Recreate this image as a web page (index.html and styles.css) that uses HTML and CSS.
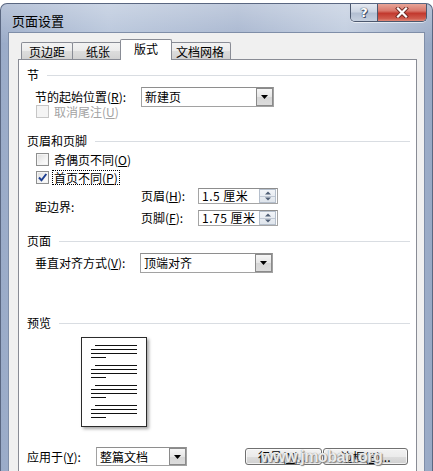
FILE: index.html
```html
<!DOCTYPE html>
<html lang="zh-CN">
<head>
<meta charset="utf-8">
<title>页面设置</title>
<link rel="stylesheet" href="styles.css">
</head>
<body>
<div class="window">
  <div class="titlebar">
    <span class="title">页面设置</span>
    <div class="caption">
      <div class="cbtn help">?</div>
      <div class="cbtn close">
        <svg width="14" height="11" viewBox="0 0 14 11"><path d="M3 1.5 L11 9.5 M11 1.5 L3 9.5" stroke="#6e2a24" stroke-width="4" stroke-linecap="square"/><path d="M3 1.5 L11 9.5 M11 1.5 L3 9.5" stroke="#fff" stroke-width="2.2" stroke-linecap="square"/></svg>
      </div>
    </div>
  </div>
  <div class="client">
    <div class="tabs">
      <div class="tab">页边距</div>
      <div class="tab">纸张</div>
      <div class="tab active">版式</div>
      <div class="tab">文档网格</div>
    </div>
    <div class="panel">
      <div class="head"><span>节</span><i class="rule"></i></div>
      <div class="row start-row">
        <span class="lbl lbl-wide">节的起始位置(<u>R</u>):</span>
        <div class="combo combo-wide"><span>新建页</span><b class="drop"><svg width="7" height="4" viewBox="0 0 7 4"><path d="M0 0H7L3.5 4Z" fill="#000"/></svg></b></div>
      </div>
      <div class="row check-row endnote-row disabled">
        <i class="box"></i><span class="ctext">取消尾注(<u>U</u>)</span>
      </div>

      <div class="head head-hf"><span>页眉和页脚</span><i class="rule"></i></div>
      <div class="row check-row cb-first">
        <i class="box"></i><span class="ctext">奇偶页不同(<u>O</u>)</span>
      </div>
      <div class="row check-row cb-next">
        <i class="box"><svg width="11" height="11" viewBox="0 0 11 11"><path d="M2 5.5 L4.5 8.3 L9.3 2" fill="none" stroke="#1d3f91" stroke-width="2"/></svg></i><span class="ctext focus">首页不同(<u>P</u>)</span>
      </div>
      <div class="row margin-block">
        <span class="lbl lbl-wide">距边界:</span>
        <div class="spins">
          <div class="spin-row">
            <span class="lbl lbl-spin">页眉(<u>H</u>):</span>
            <div class="spinbox"><span>1.5 厘米</span><b class="spinner"><i class="up"></i><i class="down"></i></b></div>
          </div>
          <div class="spin-row">
            <span class="lbl lbl-spin">页脚(<u>F</u>):</span>
            <div class="spinbox"><span>1.75 厘米</span><b class="spinner"><i class="up"></i><i class="down"></i></b></div>
          </div>
        </div>
      </div>

      <div class="head head-page"><span>页面</span><i class="rule"></i></div>
      <div class="row valign-row">
        <span class="lbl lbl-valign">垂直对齐方式(<u>V</u>):</span>
        <div class="combo combo-wide"><span>顶端对齐</span><b class="drop"><svg width="7" height="4" viewBox="0 0 7 4"><path d="M0 0H7L3.5 4Z" fill="#000"/></svg></b></div>
      </div>

      <div class="head head-preview"><span>预览</span><i class="rule"></i></div>
      <div class="preview">
        <div class="para"><i class="ln first"></i><i class="ln"></i><i class="ln"></i><i class="ln last"></i></div>
        <div class="para"><i class="ln first"></i><i class="ln"></i><i class="ln"></i><i class="ln last"></i></div>
        <div class="para"><i class="ln first"></i><i class="ln"></i><i class="ln"></i><i class="ln last"></i></div>
        <div class="para"><i class="ln first"></i><i class="ln"></i><i class="ln"></i><i class="ln last"></i></div>
      </div>

      <div class="apply-row">
        <span class="lbl lbl-apply">应用于(<u>Y</u>):</span>
        <div class="combo combo-apply"><span>整篇文档</span><b class="drop"><svg width="7" height="4" viewBox="0 0 7 4"><path d="M0 0H7L3.5 4Z" fill="#000"/></svg></b></div>
        <div class="buttons">
          <div class="btn btn-line">行号(<u>N</u>)...</div>
          <div class="btn btn-border">边框(<u>B</u>)...</div>
        </div>
      </div>
    </div>
  </div>
  <div class="watermark">www.jmoban.org</div>
</div>
</body>
</html>
```

FILE: styles.css
```css
* { box-sizing: border-box; }

html, body {
  margin: 0;
  padding: 0;
}

body {
  width: 433px;
  height: 471px;
  overflow: hidden;
  background: #ffffff;
  font-family: "Noto Sans CJK SC", "Noto Sans", sans-serif;
  font-size: 12px;
  color: #000;
}

u { text-decoration: underline; text-underline-offset: 1px; }

.window {
  position: relative;
  height: 468px;
  margin-top: 3px;
  border: 1px solid #5a6781;
  border-bottom: none;
  border-radius: 7px 7px 0 0;
  background:
    linear-gradient(to bottom, rgba(255,255,255,0.3), rgba(255,255,255,0) 40px),
    linear-gradient(to right, #9aabc8 0%, #b6c4da 25%, #a5b4ce 55%, #bfcbde 80%, #98a9c5 100%);
  padding: 0 7px;
  display: flex;
  flex-direction: column;
}

/* title bar */
.titlebar {
  height: 28px;
  display: flex;
  align-items: flex-start;
  flex: none;
}

.title {
  margin-top: 10px;
  margin-left: 4px;
  line-height: 14px;
  font-size: 13px;
  color: #000;
}

.caption {
  margin-left: auto;
  margin-right: -2px;
  display: flex;
  height: 18px;
  border: 1px solid #4c586e;
  border-top: none;
  border-radius: 0 0 5px 5px;
  overflow: hidden;
  box-shadow: 0 1px 0 rgba(255,255,255,0.6);
}

.cbtn {
  height: 17px;
  display: flex;
  align-items: center;
  justify-content: center;
}

.help {
  width: 27px;
  border-right: 1px solid #4c586e;
  background: linear-gradient(to bottom, #e4e9f1 0%, #ccd5e3 45%, #b3bfd2 55%, #c6d0df 100%);
  color: #fff;
  font-family: "DejaVu Sans", sans-serif;
  font-weight: bold;
  font-size: 13px;
  line-height: 17px;
  text-shadow: 0 0 1px #36435c, 0 0 1px #36435c, 1px 1px 0 #4a566e;
}

.close {
  width: 48px;
  background: linear-gradient(to bottom, #e8a598 0%, #d9786c 40%, #c2392e 55%, #cf5a4c 85%, #e08a7a 100%);
}

/* client */
.client {
  flex: 1;
  background: #f0f0f0;
  border: 1px solid #7f8ea8;
  border-bottom: none;
  display: flex;
  flex-direction: column;
  min-height: 0;
}

.tabs {
  display: flex;
  align-items: flex-end;
  height: 20px;
  margin-top: 6px;
  padding-left: 12px;
  flex: none;
  position: relative;
  z-index: 2;
}

.tab {
  height: 17px;
  min-width: 52px;
  padding: 0 6px;
  margin-right: -1px;
  border: 1px solid #898c95;
  border-bottom: none;
  border-radius: 2px 2px 0 0;
  background: linear-gradient(to bottom, #f3f3f3 0%, #ebebeb 50%, #dddddd 50%, #d2d2d2 100%);
  line-height: 17px;
  text-align: center;
  color: #000;
}

.tab.active {
  height: 21px;
  margin: 0 -1px -1px -3px;
  padding: 0 8px;
  background: #ffffff;
  position: relative;
  z-index: 3;
  line-height: 18px;
}

.tab.active + .tab { margin-left: -2px; }

.panel {
  flex: 1;
  margin: 0 7px 0 9px;
  background: #fff;
  border: 1px solid #898c95;
  border-bottom: none;
  padding: 8px 6px 0 8px;
  display: flex;
  flex-direction: column;
  position: relative;
  z-index: 1;
}

.head {
  display: flex;
  align-items: center;
  gap: 8px;
  height: 14px;
  line-height: 14px;
  flex: none;
}

.head .rule {
  flex: 1;
  height: 1px;
  background: #d9dde2;
}

.head-hf { margin-top: 16px; }
.head-page { margin-top: 8px; }
.head-preview { margin-top: 43px; }

.row {
  display: flex;
  align-items: center;
  padding-left: 8px;
  flex: none;
}

.lbl { white-space: nowrap; line-height: 14px; }
.lbl-wide { width: 106px; }
.lbl-valign { width: 105px; }
.lbl-spin { width: 57px; }
.lbl-apply { width: 69px; }

.start-row { margin-top: 5px; height: 20px; }

.combo {
  height: 20px;
  border: 1px solid #a2a2a2;
  border-top-color: #8e8e8e;
  background: #fff;
  display: flex;
  align-items: center;
  padding-left: 3px;
  position: relative;
}

.combo span { line-height: 14px; }

.combo-wide { width: 133px; }

.combo .drop {
  position: absolute;
  right: 0;
  top: 0;
  bottom: 0;
  width: 17px;
  border: 1px solid #8a8a8a;
  background: linear-gradient(to bottom, #f6f6f6 0%, #e6e6e6 50%, #d6d6d6 51%, #dcdcdc 100%);
  display: flex;
  align-items: center;
  justify-content: center;
}

.check-row {
  height: 13px;
  padding-left: 9px;
  gap: 3px;
}

.endnote-row { margin-top: -2px; }
.cb-first { margin-top: 5px; }
.cb-next { margin-top: 5px; }

.box {
  width: 13px;
  height: 13px;
  border: 1px solid #8e8f8f;
  background: linear-gradient(135deg, #dcdcdc 0%, #f4f4f4 60%, #ffffff 100%);
  box-shadow: inset 0 0 0 1px #f4f4f4;
  display: flex;
  align-items: center;
  justify-content: center;
  flex: none;
}

.disabled .box {
  border-color: #c6c6c6;
  background: #f4f4f4;
}

.disabled .ctext { color: #a3a3a3; }

.ctext { line-height: 13px; padding: 0 1px; border: 1px solid transparent; }
.ctext.focus { border: 1px dotted #000; }

.margin-block {
  margin-top: 4px;
  height: 38px;
}

.spins {
  display: flex;
  flex-direction: column;
  gap: 6px;
}

.spin-row {
  display: flex;
  align-items: center;
  height: 16px;
}

.spinbox {
  width: 80px;
  height: 16px;
  border: 1px solid #a5a5a5;
  border-top-color: #8d8d8d;
  background: #fff;
  display: flex;
  align-items: center;
  padding-left: 3px;
  position: relative;
}

.spinbox span { line-height: 14px; letter-spacing: 0.5px; }

.spinner {
  position: absolute;
  right: 1px;
  top: 0;
  bottom: 0;
  width: 17px;
  display: flex;
  flex-direction: column;
  border: 1px solid #b5bfcc;
  background: linear-gradient(to bottom, #f1f4f8, #dfe5ec);
}

.spinner i {
  flex: 1;
  position: relative;
}

.spinner .up { border-bottom: 1px solid #c0c8d4; }

.spinner .up::after,
.spinner .down::after {
  content: "";
  position: absolute;
  left: 50%;
  top: 50%;
  transform: translate(-50%, -50%);
  border-left: 3px solid transparent;
  border-right: 3px solid transparent;
}

.spinner .up::after { border-bottom: 3px solid #4f5e75; }
.spinner .down::after { border-top: 3px solid #4f5e75; }

.valign-row { margin-top: 5px; height: 20px; }

/* preview */
.preview {
  margin-top: 7px;
  margin-left: 54px;
  width: 66px;
  height: 90px;
  border: 1px solid #2b2b2b;
  background: #fff;
  box-shadow: 2px 2px 3px rgba(0,0,0,0.35);
  padding: 7px 9px 0 9px;
  display: flex;
  flex-direction: column;
  gap: 7px;
  flex: none;
}

.para {
  display: flex;
  flex-direction: column;
  gap: 3px;
}

.ln {
  display: block;
  height: 1px;
  background: #111;
  width: 46px;
}

.ln.first { margin-left: 4px; width: 42px; }
.ln.last { width: 15px; }

/* apply row */
.apply-row {
  margin-top: 20px;
  height: 19px;
  display: flex;
  align-items: center;
  padding-right: 2px;
  flex: none;
}

.combo-apply { width: 91px; height: 19px; }

.buttons {
  margin-left: auto;
  display: flex;
  gap: 1px;
}

.btn {
  height: 17px;
  border: 1px solid #707070;
  border-radius: 3px;
  background: linear-gradient(to bottom, #f2f2f2 0%, #ebebeb 50%, #dddddd 51%, #cfcfcf 100%);
  display: flex;
  align-items: center;
  justify-content: center;
  line-height: 14px;
  box-shadow: inset 0 0 0 1px rgba(255,255,255,0.7);
}

.btn-line { width: 77px; }
.btn-border { width: 85px; }

.watermark {
  position: absolute;
  left: 260px;
  top: 444px;
  font-family: "Liberation Sans", sans-serif;
  font-weight: bold;
  font-size: 16px;
  letter-spacing: -0.5px;
  color: rgba(255,255,255,0.85);
  text-shadow: 0 0 1px #777, 1px 1px 1px #888;
  pointer-events: none;
  z-index: 5;
}
```
